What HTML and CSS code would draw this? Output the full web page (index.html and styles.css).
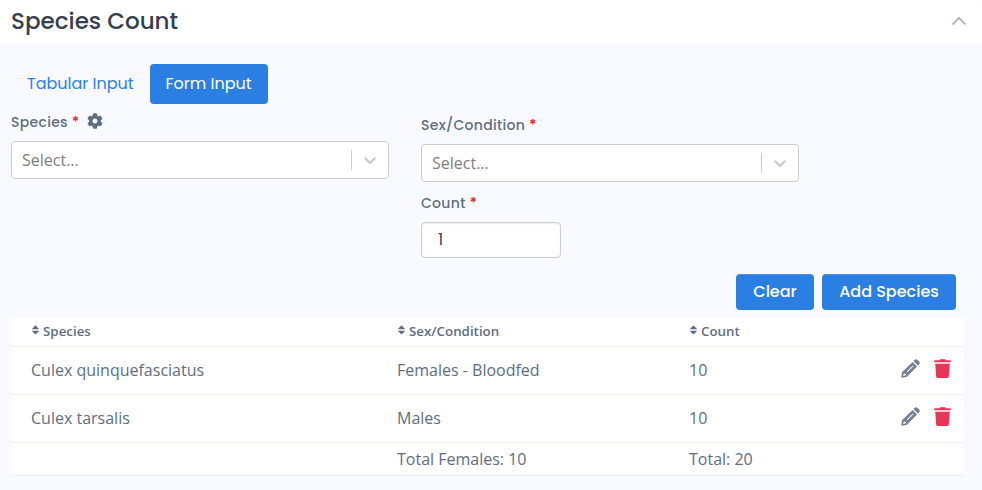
FILE: index.html
```html
<!DOCTYPE html>
<html lang="en">
<head>
<meta charset="utf-8">
<title>Species Count</title>
<link rel="stylesheet" href="styles.css">
</head>
<body>
<svg class="defs" width="0" height="0">
  <symbol id="sort" viewBox="0 0 7 10"><path d="M0.4 4.2Q-.1 4.1.4 3.4L3 .7q.5-.5 1 0l2.6 2.7q.5.7 0 .8zM0.4 5.8h6.2q.5.1 0 .8L4 9q-.5.5-1 0L.4 6.6q-.5-.7 0-.8z"/></symbol>
  <symbol id="down" viewBox="0 0 20 20"><path d="M4.516 7.548c0.436-0.446 1.043-0.481 1.576 0l3.908 3.747 3.908-3.747c0.533-0.481 1.141-0.446 1.574 0 0.436 0.445 0.408 1.197 0 1.615-0.406 0.418-4.695 4.502-4.695 4.502-0.217 0.223-0.502 0.335-0.787 0.335s-0.57-0.112-0.789-0.335c0 0-4.287-4.084-4.695-4.502s-0.436-1.17 0-1.615z"/></symbol>
  <symbol id="pencil" viewBox="0 0 19 19"><path fill-rule="evenodd" d="M.2 18.8L1 13.3 11.6 2.9 16.1 7.4 5.7 17.9zM2.8 14.2l-.6 2.7 2.7-.6.2-1.4-1.3-.1zM5.6 12.6l.7.7 6.3-6.2-.7-.7zM12.4 2.1L13.7.8q1.4-1.1 2.8 0l1.7 1.7q1.1 1.4 0 2.8l-1.3 1.3z"/></symbol>
  <symbol id="trash" viewBox="0 0 17 19"><path d="M.7 1.2h4.6L6 .2h5l.7 1h4.6q.5 0 .5.5v1.6H.2V1.7q0-.5.5-.5zM1.2 4.7h14.6l-1 12.7q-.2 1.5-1.6 1.5H3.8q-1.4 0-1.6-1.5z"/></symbol>
</svg>
<header class="header">
  <h1 class="title">Species Count</h1>
  <svg class="collapse" viewBox="0 0 16 10"><path d="M1.5 8.5L8 2l6.5 6.5"/></svg>
</header>
<main class="content">
  <nav class="tabs">
    <a class="tab">Tabular Input</a>
    <a class="tab active">Form Input</a>
  </nav>
  <section class="form">
    <div class="field species">
      <div class="label">Species<b>*</b>
        <svg class="cog" viewBox="0 0 512 512"><path d="M487.4 315.7l-42.6-24.6c4.3-23.2 4.3-47 0-70.2l42.6-24.6c4.9-2.8 7.1-8.6 5.5-14-11.1-35.6-30-67.8-54.7-94.6-3.8-4.1-10-5.1-14.8-2.3L380.8 110c-17.9-15.4-38.5-27.3-60.8-35.1V25.8c0-5.6-3.9-10.5-9.4-11.7-36.7-8.2-74.3-7.8-109.2 0-5.5 1.2-9.4 6.1-9.4 11.7V75c-22.2 7.9-42.8 19.8-60.8 35.1L88.7 85.5c-4.9-2.8-11-1.9-14.8 2.3-24.7 26.7-43.6 58.9-54.7 94.6-1.7 5.4.6 11.2 5.5 14L67.3 221c-4.3 23.2-4.3 47 0 70.2l-42.6 24.6c-4.9 2.8-7.1 8.6-5.5 14 11.1 35.6 30 67.8 54.7 94.6 3.8 4.1 10 5.1 14.8 2.3l42.6-24.6c17.9 15.4 38.5 27.3 60.8 35.1v49.2c0 5.6 3.9 10.5 9.4 11.7 36.7 8.2 74.3 7.8 109.2 0 5.5-1.2 9.4-6.1 9.4-11.7v-49.2c22.2-7.9 42.8-19.8 60.8-35.1l42.6 24.6c4.9 2.8 11 1.9 14.8-2.3 24.7-26.7 43.6-58.9 54.7-94.6 1.5-5.5-.7-11.3-5.6-14.1zM256 336c-44.1 0-80-35.9-80-80s35.9-80 80-80 80 35.9 80 80-35.9 80-80 80z"/></svg>
      </div>
      <div class="select"><span>Select...</span><i></i><svg><use href="#down"/></svg></div>
    </div>
    <div class="field">
      <div class="label">Sex/Condition<b>*</b></div>
      <div class="select"><span>Select...</span><i></i><svg><use href="#down"/></svg></div>
      <div class="label">Count<b>*</b></div>
      <div class="input">1</div>
    </div>
  </section>
  <div class="actions">
    <button class="btn clear">Clear</button>
    <button class="btn add">Add Species</button>
  </div>
  <div class="table">
    <div class="row head">
      <div><svg><use href="#sort"/></svg>Species</div>
      <div><svg><use href="#sort"/></svg>Sex/Condition</div>
      <div><svg><use href="#sort"/></svg>Count</div>
      <div></div>
    </div>
    <div class="row">
      <div>Culex quinquefasciatus</div><div>Females - Bloodfed</div><div>10</div>
      <div class="tools"><svg class="edit"><use href="#pencil"/></svg><svg class="trash"><use href="#trash"/></svg></div>
    </div>
    <div class="row">
      <div>Culex tarsalis</div><div>Males</div><div>10</div>
      <div class="tools"><svg class="edit"><use href="#pencil"/></svg><svg class="trash"><use href="#trash"/></svg></div>
    </div>
    <div class="row total">
      <div></div><div>Total Females: 10</div><div>Total: 20</div><div></div>
    </div>
  </div>
</main>
</body>
</html>
```
FILE: styles.css
```css
* { box-sizing: border-box; }
body { margin: 0; height: 490px; overflow: hidden; background: #f9faff; color: #5e6e82; font: 16px/24px "Open Sans", "Noto Sans", sans-serif; -webkit-font-smoothing: antialiased; }
svg { display: block; fill: currentColor; flex: none; }
.defs { position: absolute; }
.header { height: 44px; padding: 0 15px 2px 11px; background: #fff; display: flex; align-items: center; justify-content: space-between; border-top-right-radius: 3px; }
.title { margin: 0; color: #344050; font: 500 23.04px/30px Poppins, Inter, sans-serif; }
.collapse { width: 16px; height: 10px; fill: none; stroke: #9da9bb; stroke-width: 1.6; }
.content { padding: 20px 18px 0 11px; }
.tabs { display: flex; height: 40px; font: 400 16px/24px Poppins, Inter, sans-serif; }
.tab { padding: 8px 16px; width: 139px; color: #2c7fe2; white-space: nowrap; }
.tab.active { width: 118px; padding-left: 15.5px; background: #2c7fe2; color: #fff; border-radius: 4px; }
.form { display: grid; grid-template-columns: 378px 378px; gap: 32px; height: 170px; }
.label { display: flex; align-items: center; gap: 4px; height: 20px; margin: 11px 0 9px; font: 500 14px/20px Poppins, Inter, sans-serif; letter-spacing: 0.3px; white-space: nowrap; }
.label b { color: #ff0018; font-weight: 500; }
.species .label { height: 18px; margin: 9px 0 10px; }
.cog { width: 16px; height: 16px; margin: -3px 0 0 4px; }
.select { height: 38px; padding: 0 8px 0 10px; background: #fff; border: 1px solid #ccc; border-radius: 4px; display: flex; align-items: center; color: #808080; }
.select span { flex: 1; }
.select i { width: 1px; height: 20px; background: #ccc; margin-right: 8px; }
.select svg { width: 20px; height: 20px; fill: #ccc; }
.input { width: 140px; height: 36px; padding: 4px 16px; background: #fff; color: #344050; border: 1px solid #ccc; border-radius: 4px; box-shadow: inset 0 1px 2px rgba(0,0,0,.08); font: 400 16px/26px Poppins, Inter, sans-serif; }
.actions { display: flex; justify-content: flex-end; gap: 8px; height: 36px; padding-right: 8px; }
.btn { border: 0; padding: 0; height: 36px; border-radius: 4px; background: #2c7fe2; color: #fff; font: 500 16px/34px Poppins, Inter, sans-serif; box-shadow: inset 0 1px rgba(255,255,255,.15); white-space: nowrap; }
.clear { width: 78px; }
.add { width: 134px; }
.table { margin-top: 8px; background: #fff; }
.row { display: grid; grid-template-columns: 366px 292px 180px 1fr; height: 48px; padding: 0 0 2px 20px; align-items: center; border-bottom: 1px solid #e8f0f9; }
.row.head { height: 29px; font-size: 13.33px; font-weight: 600; line-height: 20px; }
.head div { display: flex; align-items: center; gap: 4px; }
.head svg { width: 7px; height: 10px; margin: 0 0 2px 1px; }
.row.total { height: 33px; padding-bottom: 0; }
.tools { display: flex; justify-content: flex-end; gap: 14px; padding: 0 13px 2px 0; }
.edit { width: 19px; height: 19px; fill: #748194; }
.trash { width: 17px; height: 19px; fill: #e63757; }
```
